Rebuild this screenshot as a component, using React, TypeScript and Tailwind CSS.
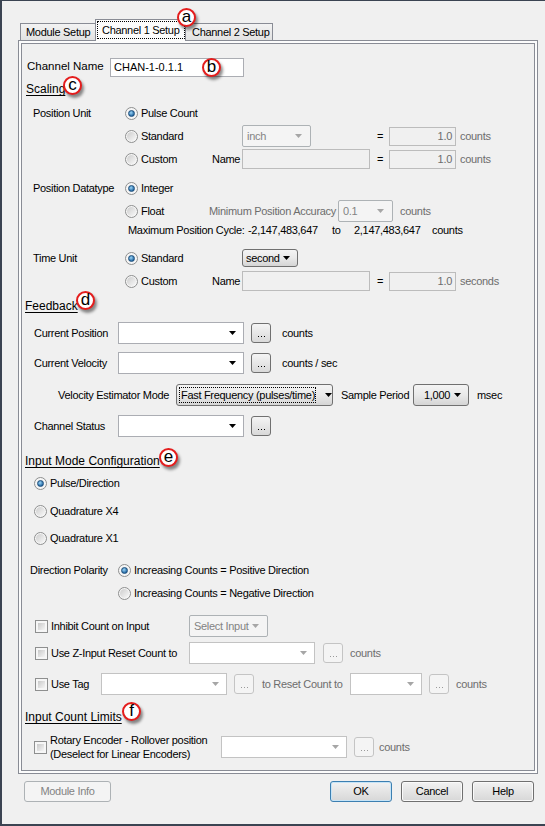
import type { ReactNode } from "react";

const Arrow = ({ color = "#000" }: { color?: string }) => (
  <svg width="7" height="4" viewBox="0 0 7 4" className="shrink-0">
    <path d="M0 0h7L3.5 4z" fill={color} />
  </svg>
);

const Radio = ({ on = false }: { on?: boolean }) => (
  <span className="w-[13px] h-[13px] shrink-0 rounded-full border border-[#8e8f8f] bg-[#f6f6f6] flex items-center justify-center">
    {on ? (
      <span className="w-[7px] h-[7px] rounded-full border border-[#1d4f7c] bg-[radial-gradient(circle_at_40%_35%,#9bd6f7,#1f63a0_75%)]" />
    ) : (
      <span className="w-[9px] h-[9px] rounded-full bg-linear-to-br from-[#cdcdcd] to-[#f9f9f9]" />
    )}
  </span>
);

const Check = () => (
  <span className="w-[13px] h-[13px] shrink-0 border border-[#8e8f8f] bg-[#f6f6f6] p-[2px] flex">
    <span className="flex-1 bg-linear-to-br from-[#c9c9c9] to-[#f5f5f5]" />
  </span>
);

const Row = ({ className, children }: { className: string; children?: ReactNode }) => (
  <div className={"flex items-center shrink-0 " + className}>{children}</div>
);

const Combo = ({ className, disabled = false }: { className: string; disabled?: boolean }) => (
  <div
    className={
      "h-[22px] bg-white border flex items-center justify-end pr-[7px] " +
      (disabled ? "border-[#c3c3c3] " : "border-[#abadb3] ") +
      className
    }
  >
    <Arrow color={disabled ? "#a6a6a6" : "#000"} />
  </div>
);

const DropBtn = ({ className, children }: { className: string; children: ReactNode }) => (
  <div
    className={
      "rounded-[3px] border border-[#707070] bg-linear-to-b from-[#f4f4f4] via-[#e9e9e9] to-[#d5d5d5] flex items-center gap-[3px] pr-[7px] " +
      className
    }
  >
    {children}
    <Arrow />
  </div>
);

const DisDrop = ({ className, text }: { className: string; text?: string }) => (
  <div
    className={
      "h-[22px] rounded-[2px] border border-[#adb2b5] bg-[#f4f4f4] text-[#838383] flex items-center pl-[4px] pr-[8px] " +
      className
    }
  >
    <span className="flex-1">{text}</span>
    <Arrow color="#a6a6a6" />
  </div>
);

const Dots = ({ disabled = false, className = "" }: { disabled?: boolean; className?: string }) => (
  <div
    className={
      "w-[20px] h-[20px] shrink-0 rounded-[3px] border flex items-end justify-center gap-[2px] pb-[5px] " +
      (disabled
        ? "border-[#c4c4c4] bg-[#f4f4f4] "
        : "border-[#707070] bg-linear-to-b from-[#f4f4f4] to-[#d9d9d9] ") +
      className
    }
  >
    <span className={"w-px h-px " + (disabled ? "bg-[#9a9a9a]" : "bg-black")} />
    <span className={"w-px h-px " + (disabled ? "bg-[#9a9a9a]" : "bg-black")} />
    <span className={"w-px h-px " + (disabled ? "bg-[#9a9a9a]" : "bg-black")} />
  </div>
);

const DisBox = ({ className, text }: { className: string; text?: string }) => (
  <div
    className={
      "h-[19px] border border-[#bcbcbc] bg-[#f0f0f0] text-[#6d6d6d] flex items-center justify-end pr-[3px] " +
      className
    }
  >
    {text}
  </div>
);

const Badge = ({ letter, className }: { letter: string; className: string }) => (
  <div
    className={
      "absolute z-20 w-[19px] h-[19px] rounded-full border-2 border-[#e41d1d] bg-white shadow-[2px_3px_3px_rgba(0,0,0,0.45)] flex items-center justify-center text-[17px] tracking-normal leading-none pb-[2px] " +
      className
    }
  >
    {letter}
  </div>
);

const Heading = ({ children }: { children: ReactNode }) => (
  <span className="text-[12px] tracking-normal underline underline-offset-2">{children}</span>
);

export default function App() {
  return (
    <div className="relative w-[545px] h-[826px] overflow-hidden whitespace-nowrap bg-[#f0f0f0] border-l-2 border-t border-b-2 border-[#3b4452] font-['Liberation_Sans',Arial,sans-serif] text-[11px] tracking-[-0.3px] text-black leading-none">
      {/* tabs */}
      <div className="ml-[18px] mt-[18px] flex items-end h-[22px]">
        <div className="w-[75px] h-[18px] border border-r-0 border-[#898c95] bg-linear-to-b from-[#f3f3f3] to-[#e2e2e2] pl-[5px] flex items-center">
          Module Setup
        </div>
        <div className="relative z-10 w-[91px] h-[22px] border-x border-t border-[#898c95] bg-[#fcfcfc] pt-px pl-px">
          <div className="w-[88px] h-[18px] border border-dotted border-black flex items-center pl-[4px]">
            Channel 1 Setup
          </div>
        </div>
        <div className="w-[87px] h-[18px] border border-l-0 border-[#898c95] bg-linear-to-b from-[#f3f3f3] to-[#e2e2e2] pl-[6px] flex items-center">
          Channel 2 Setup
        </div>
      </div>

      {/* panel */}
      <div className="ml-[16px] -mt-px w-[520px] h-[734px] border border-[#898c95] p-[2px] bg-[#fcfcfc]">
        <div className="h-full border border-[#898c95] bg-[#f0f0f0] pt-[12px] flex flex-col">
          <Row className="h-[22px] pl-[5px]">
            <span className="w-[83px] text-[11.5px] tracking-normal">Channel Name</span>
            <div className="w-[134px] h-[19px] bg-white border border-[#abadb3] flex items-center pl-[3px] tracking-normal">
              CHAN-1-0.1.1
            </div>
          </Row>
          <Row className="h-[22px] pl-[4px]">
            <Heading>Scaling</Heading>
          </Row>

          {/* position unit */}
          <Row className="h-[22px] mt-[2px] pl-[11px]">
            <span className="w-[92px]">Position Unit</span>
            <Radio on />
            <span className="ml-[3px]">Pulse Count</span>
          </Row>
          <Row className="h-[22px] mt-px pl-[103px]">
            <div className="w-[117px] flex items-center">
              <Radio />
              <span className="ml-[3px]">Standard</span>
            </div>
            <DisDrop className="w-[69px]" text="inch" />
            <span className="w-[78px] pl-[66px]">=</span>
            <DisBox className="w-[67px]" text="1.0" />
            <span className="ml-[4px] text-[#6d6d6d]">counts</span>
          </Row>
          <Row className="h-[22px] mt-px pl-[103px]">
            <div className="w-[87px] flex items-center">
              <Radio />
              <span className="ml-[3px]">Custom</span>
            </div>
            <span className="w-[30px]">Name</span>
            <DisBox className="w-[128px] h-[20px]" />
            <span className="w-[19px] pl-[7px]">=</span>
            <DisBox className="w-[67px]" text="1.0" />
            <span className="ml-[4px] text-[#6d6d6d]">counts</span>
          </Row>

          {/* position datatype */}
          <Row className="h-[22px] mt-[7px] pl-[11px]">
            <span className="w-[92px]">Position Datatype</span>
            <Radio on />
            <span className="ml-[3px]">Integer</span>
          </Row>
          <Row className="h-[22px] mt-px pl-[103px]">
            <div className="w-[84px] flex items-center">
              <Radio />
              <span className="ml-[3px]">Float</span>
            </div>
            <span className="w-[129px] text-[#6d6d6d]">Minimum Position Accuracy</span>
            <DisDrop className="w-[55px]" text="0.1" />
            <span className="ml-[7px] text-[#6d6d6d]">counts</span>
          </Row>
          <Row className="h-[16px] pl-[106px]">
            <span className="w-[120px]">Maximum Position Cycle:</span>
            <span className="w-[84px]">-2,147,483,647</span>
            <span className="w-[22px]">to</span>
            <span className="w-[78px]">2,147,483,647</span>
            <span>counts</span>
          </Row>

          {/* time unit */}
          <Row className="h-[22px] mt-[9px] pl-[11px]">
            <span className="w-[92px]">Time Unit</span>
            <div className="w-[117px] flex items-center">
              <Radio on />
              <span className="ml-[3px]">Standard</span>
            </div>
            <DropBtn className="w-[56px] h-[18px] pl-[3px]">
              <span className="flex-1">second</span>
            </DropBtn>
          </Row>
          <Row className="h-[22px] mt-px pl-[103px]">
            <div className="w-[87px] flex items-center">
              <Radio />
              <span className="ml-[3px]">Custom</span>
            </div>
            <span className="w-[30px]">Name</span>
            <DisBox className="w-[128px] h-[20px]" />
            <span className="w-[19px] pl-[7px]">=</span>
            <DisBox className="w-[67px]" text="1.0" />
            <span className="ml-[4px] text-[#6d6d6d]">seconds</span>
          </Row>

          {/* feedback */}
          <Row className="h-[22px] mt-[3px] pl-[3px]">
            <Heading>Feedback</Heading>
          </Row>
          <Row className="h-[22px] mt-[5px] pl-[12px]">
            <span className="w-[84px]">Current Position</span>
            <Combo className="w-[126px]" />
            <Dots className="ml-[7px]" />
            <span className="ml-[11px]">counts</span>
          </Row>
          <Row className="h-[22px] mt-[8px] pl-[12px]">
            <span className="w-[84px]">Current Velocity</span>
            <Combo className="w-[126px]" />
            <Dots className="ml-[7px]" />
            <span className="ml-[11px]">counts / sec</span>
          </Row>
          <Row className="h-[22px] mt-[10px] pl-[36px]">
            <span className="w-[118px]">Velocity Estimator Mode</span>
            <DropBtn className="w-[157px] h-[22px] pl-[2px]">
              <span className="flex-1 mr-[6px] h-[16px] border border-dotted border-black flex items-center pl-px">
                Fast Frequency (pulses/time)
              </span>
            </DropBtn>
            <span className="w-[80px] pl-[8px]">Sample Period</span>
            <DropBtn className="w-[56px] h-[22px] pl-[10px]">
              <span className="flex-1">1,000</span>
            </DropBtn>
            <span className="ml-[8px]">msec</span>
          </Row>
          <Row className="h-[22px] mt-[9px] pl-[12px]">
            <span className="w-[84px]">Channel Status</span>
            <Combo className="w-[126px]" />
            <Dots className="ml-[7px]" />
          </Row>

          {/* input mode */}
          <Row className="h-[22px] mt-[13px] pl-[3px]">
            <Heading>Input Mode Configuration</Heading>
          </Row>
          <Row className="h-[22px] pl-[12px]">
            <Radio on />
            <span className="ml-[3px]">Pulse/Direction</span>
          </Row>
          <Row className="h-[22px] mt-[6px] pl-[12px]">
            <Radio />
            <span className="ml-[3px]">Quadrature X4</span>
          </Row>
          <Row className="h-[22px] mt-[5px] pl-[12px]">
            <Radio />
            <span className="ml-[3px]">Quadrature X1</span>
          </Row>
          <Row className="h-[22px] mt-[10px] pl-[8px]">
            <span className="w-[88px]">Direction Polarity</span>
            <Radio on />
            <span className="ml-[3px]">Increasing Counts = Positive Direction</span>
          </Row>
          <Row className="h-[22px] mt-px pl-[96px]">
            <Radio />
            <span className="ml-[3px]">Increasing Counts = Negative Direction</span>
          </Row>

          {/* checkboxes */}
          <Row className="h-[22px] mt-[11px] pl-[13px]">
            <div className="w-[154px] flex items-center">
              <Check />
              <span className="ml-[3px]">Inhibit Count on Input</span>
            </div>
            <DisDrop className="w-[79px]" text="Select Input" />
          </Row>
          <Row className="h-[22px] mt-[5px] pl-[13px]">
            <div className="w-[154px] flex items-center">
              <Check />
              <span className="ml-[3px]">Use Z-Input Reset Count to</span>
            </div>
            <Combo className="w-[126px]" disabled />
            <Dots disabled className="ml-[8px] w-[19px]" />
            <span className="ml-[7px] text-[#6d6d6d]">counts</span>
          </Row>
          <Row className="h-[22px] mt-[9px] pl-[13px]">
            <div className="w-[66px] flex items-center">
              <Check />
              <span className="ml-[3px]">Use Tag</span>
            </div>
            <Combo className="w-[126px]" disabled />
            <Dots disabled className="ml-[7px] w-[19px]" />
            <span className="w-[96px] pl-[8px] text-[#6d6d6d]">to Reset Count to</span>
            <Combo className="w-[72px]" disabled />
            <Dots disabled className="ml-[7px] w-[19px]" />
            <span className="ml-[7px] text-[#6d6d6d]">counts</span>
          </Row>

          {/* count limits */}
          <Row className="h-[22px] mt-[11px] pl-[3px]">
            <Heading>Input Count Limits</Heading>
          </Row>
          <Row className="h-[22px] mt-[8px] pl-[12px]">
            <div className="w-[187px] flex items-center">
              <Check />
              <span className="ml-[3px] leading-[14px]">
                Rotary Encoder - Rollover position
                <br />
                (Deselect for Linear Encoders)
              </span>
            </div>
            <Combo className="w-[126px]" disabled />
            <Dots disabled className="ml-[7px] w-[19px]" />
            <span className="ml-[5px] text-[#6d6d6d]">counts</span>
          </Row>
        </div>
      </div>

      {/* bottom buttons */}
      <div className="mt-[7px] flex items-center">
        <div className="ml-[22px] w-[87px] h-[21px] rounded-[3px] border border-[#adb2b5] bg-[#f4f4f4] text-[#838383] flex items-center justify-center">
          Module Info
        </div>
        <div className="ml-[219px] w-[62px] h-[21px] rounded-[3px] border border-[#3c7fb1] bg-linear-to-b from-[#f2f2f2] to-[#d7d7d7] shadow-[inset_0_0_0_1px_#c6e4f7] flex items-center justify-center">
          OK
        </div>
        <div className="ml-[9px] w-[62px] h-[21px] rounded-[3px] border border-[#707070] bg-linear-to-b from-[#f2f2f2] to-[#d7d7d7] shadow-[inset_0_0_0_1px_#fafafa] flex items-center justify-center">
          Cancel
        </div>
        <div className="ml-[9px] w-[62px] h-[21px] rounded-[3px] border border-[#707070] bg-linear-to-b from-[#f2f2f2] to-[#d7d7d7] shadow-[inset_0_0_0_1px_#fafafa] flex items-center justify-center">
          Help
        </div>
      </div>

      {/* callouts */}
      <Badge letter="a" className="left-[175px] top-[7px]" />
      <Badge letter="b" className="left-[200px] top-[57px]" />
      <Badge letter="c" className="left-[61px] top-[75px]" />
      <Badge letter="d" className="left-[74px] top-[290px]" />
      <Badge letter="e" className="left-[157px] top-[447px]" />
      <Badge letter="f" className="left-[120px] top-[701px]" />
    </div>
  );
}
